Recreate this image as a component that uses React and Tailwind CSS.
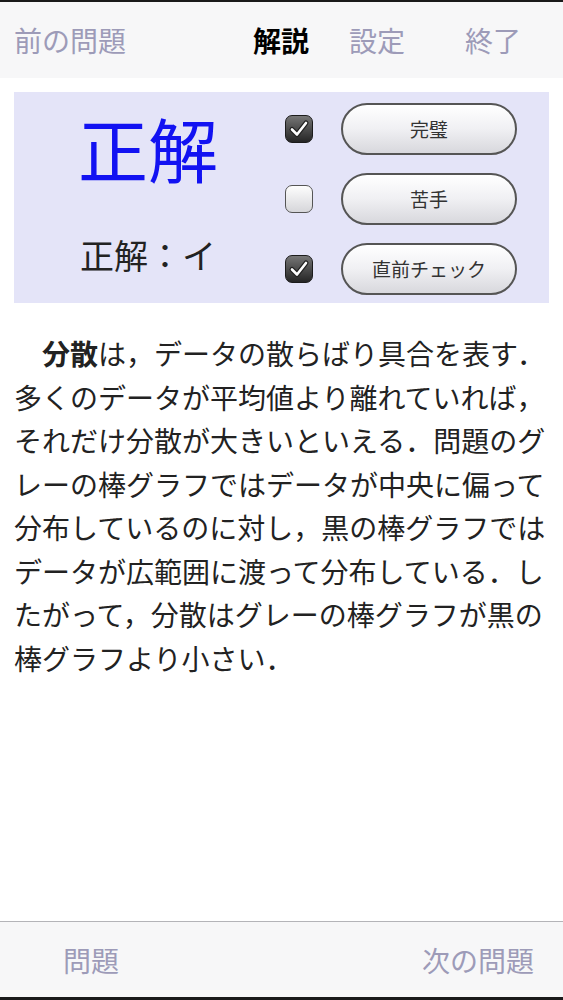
import React from 'react';

const Check = ({ on }) => (
    <div className={`w-[28px] h-[28px] rounded-[7px] border flex items-center justify-center ${on ? 'bg-linear-to-b from-[#777] to-[#262626] border-[#1c1c1c]' : 'bg-linear-to-b from-[#fdfdfd] to-[#d6d6da] border-[#555]'}`}>
        {on && (
            <svg width="22" height="22" viewBox="0 0 22 22">
                <path d="M4 11.5 L9 16.5 L18 5" fill="none" stroke="#222" strokeWidth="5" strokeLinecap="round" strokeLinejoin="round" />
                <path d="M4 11.5 L9 16.5 L18 5" fill="none" stroke="#fff" strokeWidth="2.6" strokeLinecap="round" strokeLinejoin="round" />
            </svg>
        )}
    </div>
);

const Btn = ({ children }) => (
    <div className="w-[176px] h-[52px] rounded-full border-2 border-[#555] bg-linear-to-b from-white via-[#f0f0f3] to-[#d8d8dd] flex items-center justify-center text-[19px] text-[#333]">
        {children}
    </div>
);

const lines = [
    <><span className="font-bold">分散</span>は，データの散らばり具合を表す．</>,
    '多くのデータが平均値より離れていれば，',
    'それだけ分散が大きいといえる．問題のグ',
    'レーの棒グラフではデータが中央に偏って',
    '分布しているのに対し，黒の棒グラフでは',
    'データが広範囲に渡って分布している．し',
    'たがって，分散はグレーの棒グラフが黒の',
    '棒グラフより小さい．',
];

export default function App() {
    return (
        <div className="h-[1000px] flex flex-col bg-white border-t-2 border-b-[3px] border-[#1a1a1a] font-['Noto_Sans_CJK_JP',sans-serif]">
            {/* top bar */}
            <div className="h-[76px] bg-[#f7f7f8] flex items-center text-[28px] text-[#9d9bb8] leading-none">
                <span className="ml-[14px]">前の問題</span>
                <span className="ml-[127px] font-bold text-black">解説</span>
                <span className="ml-[40px]">設定</span>
                <span className="ml-[60px]">終了</span>
            </div>

            <div className="flex-1">
                <div className="mx-[14px] mt-[14px] h-[211px] bg-[#e4e4f8] flex">
                    <div className="w-[268px] flex flex-col items-center">
                        <div className="mt-[21px] text-[70px] leading-[70px] text-[#1212f2]">正解</div>
                        <div className="mt-[55px] text-[34px] leading-[34px] text-[#222]">正解：イ</div>
                    </div>
                    <div className="ml-[3px] flex flex-col gap-[18px] pt-[11px]">
                        <div className="flex items-center gap-[28px]"><Check on /><Btn>完璧</Btn></div>
                        <div className="flex items-center gap-[28px]"><Check /><Btn>苦手</Btn></div>
                        <div className="flex items-center gap-[28px]"><Check on /><Btn>直前チェック</Btn></div>
                    </div>
                </div>

                <div className="mt-[29px] px-[14px] text-[28px] leading-[43.5px] text-[#222] whitespace-nowrap">
                    {lines.map((l, i) => (
                        <div key={i} className={i === 0 ? 'pl-[28px]' : ''}>{l}</div>
                    ))}
                </div>
            </div>

            {/* bottom bar */}
            <div className="h-[76px] bg-[#f7f7f8] border-t border-[#b4b4b8] flex items-center text-[28px] text-[#9d9bb8] leading-none">
                <span className="ml-[63px]">問題</span>
                <span className="ml-auto mr-[29px]">次の問題</span>
            </div>
        </div>
    );
}
